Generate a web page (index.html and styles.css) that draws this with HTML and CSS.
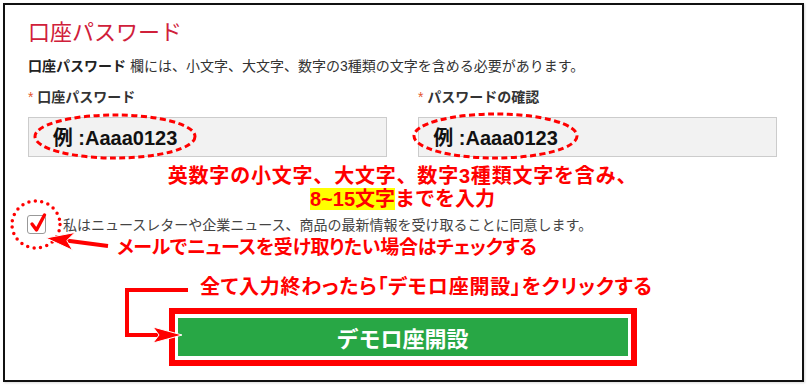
FILE: index.html
```html
<!DOCTYPE html>
<html lang="ja">
<head>
    <meta charset="UTF-8">
    <meta name="viewport" content="width=device-width, initial-scale=1.0">
    <title>口座パスワード</title>
    <link rel="stylesheet" href="styles.css">
</head>
<body>

    <div class="frame">
        <h2 class="title">口座パスワード</h2>
        <p class="hint"><strong>口座パスワード</strong> 欄には、小文字、大文字、数字の3種類の文字を含める必要があります。</p>

        <div class="fields">
            <div class="field">
                <label class="label"><span class="req">*</span> 口座パスワード</label>
                <div class="input">
                    <div class="example example-left">
                        <svg viewBox="0 0 164 47" preserveAspectRatio="none"><ellipse cx="82" cy="23.5" rx="80" ry="21.5" /></svg>
                        <span>例 :Aaaa0123</span>
                    </div>
                </div>
            </div>
            <div class="field">
                <label class="label"><span class="req">*</span> パスワードの確認</label>
                <div class="input">
                    <div class="example example-right">
                        <svg viewBox="0 0 167 48" preserveAspectRatio="none"><ellipse cx="83.5" cy="24" rx="81.5" ry="22" /></svg>
                        <span>例 :Aaaa0123</span>
                    </div>
                </div>
            </div>
        </div>

        <p class="note note-rule"><span class="wide">英数字の小文字、大文字、数字3種類文字を含み、</span><br><mark>8~15文字</mark>までを入力</p>

        <div class="consent">
            <span class="checkbox">
                <svg class="tick" viewBox="0 0 16 20"><path d="M2 11 L6.5 17 L14.5 2" /></svg>
            </span>
            <span class="consent-text">私はニュースレターや企業ニュース、商品の最新情報を受け取ることに同意します。</span>
            <svg class="ring" viewBox="0 0 52 51"><ellipse cx="26" cy="25.5" rx="24" ry="23.5" /></svg>
        </div>

        <div class="note note-mail">
            <svg class="arrow-mail" viewBox="0 0 68 24">
                <line x1="22" y1="12.4" x2="64" y2="18" />
                <polygon points="2,10 31,4.5 22.8,12.5 28.7,22.3" />
            </svg>
            メールでニュースを受け取りたい場合はチェックする
        </div>

        <div class="submit-area">
            <div class="note note-submit">全て入力終わったら「デモロ座開設」をクリックする</div>
            <svg class="arrow-submit" viewBox="0 0 70 61">
                <polyline points="68,6 7,6 7,51 40,51" />
                <polygon points="62,51 33,43 39,51 33,59" />
            </svg>
            <div class="submit-box">
                <button class="submit-btn">デモロ座開設</button>
            </div>
        </div>
    </div>

</body>
</html>
```

FILE: styles.css
```css
body {
    margin: 0;
    background: #fff;
    font-family: "Liberation Sans", "Noto Sans CJK JP", sans-serif;
    color: #333;
}
.frame {
    margin: 3px;
    width: 801px;
    height: 379px;
    box-sizing: border-box;
    border: 2px solid #111;
    padding: 14px 25px 0 23px;
    box-shadow: 1px 1px 2px rgba(0, 0, 0, 0.15);
}
.title {
    margin: 0;
    font-size: 22px;
    line-height: 28px;
    font-weight: normal;
    color: #d0203a;
}
.hint {
    margin: 9px 0 0;
    font-size: 14px;
    line-height: 20px;
}
.hint strong {
    color: #222;
}
.fields {
    display: grid;
    grid-template-columns: 1fr 1fr;
    column-gap: 31px;
    margin-top: 11px;
}
.label {
    display: block;
    font-size: 14px;
    line-height: 20px;
    font-weight: bold;
    color: #333;
}
.req {
    color: #e4572e;
    font-weight: normal;
}
.input {
    position: relative;
    margin-top: 10px;
    height: 40px;
    box-sizing: border-box;
    background: #f2f2f2;
    border: 1px solid #ccc;
}
.example {
    position: absolute;
    display: flex;
    align-items: center;
    justify-content: center;
    font-size: 20px;
    font-weight: bold;
    color: #111;
}
.example span {
    position: relative;
}
.example svg {
    position: absolute;
    left: 0;
    top: 0;
    width: 100%;
    height: 100%;
    overflow: visible;
}
.example ellipse {
    fill: none;
    stroke: #f00;
    stroke-width: 3;
    stroke-dasharray: 6 3.5;
}
.example-left {
    left: 4px;
    top: -5px;
    width: 164px;
    height: 47px;
}
.example-right {
    left: -7px;
    top: -6px;
    width: 167px;
    height: 48px;
}
.note {
    color: #f00;
    font-weight: bold;
    font-size: 20px;
}
.note-rule {
    margin: 8px 0 0;
    text-align: center;
    line-height: 23px;
}
.note-rule .wide {
    letter-spacing: 0.8px;
}
mark {
    background: #ffff00;
    color: inherit;
}
.consent {
    position: relative;
    display: flex;
    align-items: center;
    margin-top: 3px;
    height: 20px;
    font-size: 14px;
    color: #444;
}
.checkbox {
    position: relative;
    flex: none;
    width: 19px;
    height: 19px;
    box-sizing: border-box;
    border: 1px solid #999;
    border-radius: 3px;
    margin-left: -1px;
    margin-right: 17px;
    background: #fff;
}
.tick {
    position: absolute;
    left: 2px;
    top: -3px;
    width: 16px;
    height: 20px;
    overflow: visible;
}
.tick path {
    fill: none;
    stroke: #f00;
    stroke-width: 3.4;
    stroke-linecap: round;
    stroke-linejoin: round;
}
.ring {
    position: absolute;
    left: -18px;
    top: -15px;
    width: 52px;
    height: 51px;
    overflow: visible;
}
.ring ellipse {
    fill: none;
    stroke: #f00;
    stroke-width: 3.5;
    stroke-linecap: round;
    stroke-dasharray: 0 6.5;
}
.note-mail {
    position: relative;
    margin-top: 2px;
    padding-left: 89px;
    font-size: 19px;
    line-height: 24px;
    letter-spacing: -0.3px;
    font-feature-settings: "palt";
}
.arrow-mail {
    position: absolute;
    left: 16px;
    top: -8px;
    width: 68px;
    height: 24px;
    overflow: visible;
}
.arrow-mail line,
.arrow-submit polyline {
    fill: none;
    stroke: #f00;
    stroke-width: 4;
}
.arrow-mail polygon,
.arrow-submit polygon {
    fill: #f00;
    stroke: #fff;
    stroke-width: 1;
}
.submit-area {
    position: relative;
    margin-top: 15px;
}
.note-submit {
    padding-left: 172px;
    line-height: 24px;
    letter-spacing: 0.75px;
    font-feature-settings: "palt";
}
.arrow-submit {
    position: absolute;
    left: 92px;
    top: 9px;
    width: 70px;
    height: 61px;
    overflow: visible;
    z-index: 1;
}
.submit-box {
    width: 468px;
    box-sizing: border-box;
    margin: 9px auto 0;
    border: 6px solid #f00;
    padding: 4px 3px;
    background: #fff;
}
.submit-btn {
    display: block;
    width: 100%;
    height: 38px;
    border: 0;
    background: #28a745;
    color: #fff;
    font-family: "Noto Sans CJK JP", sans-serif;
    font-size: 22px;
    font-weight: bold;
    cursor: pointer;
}
```
